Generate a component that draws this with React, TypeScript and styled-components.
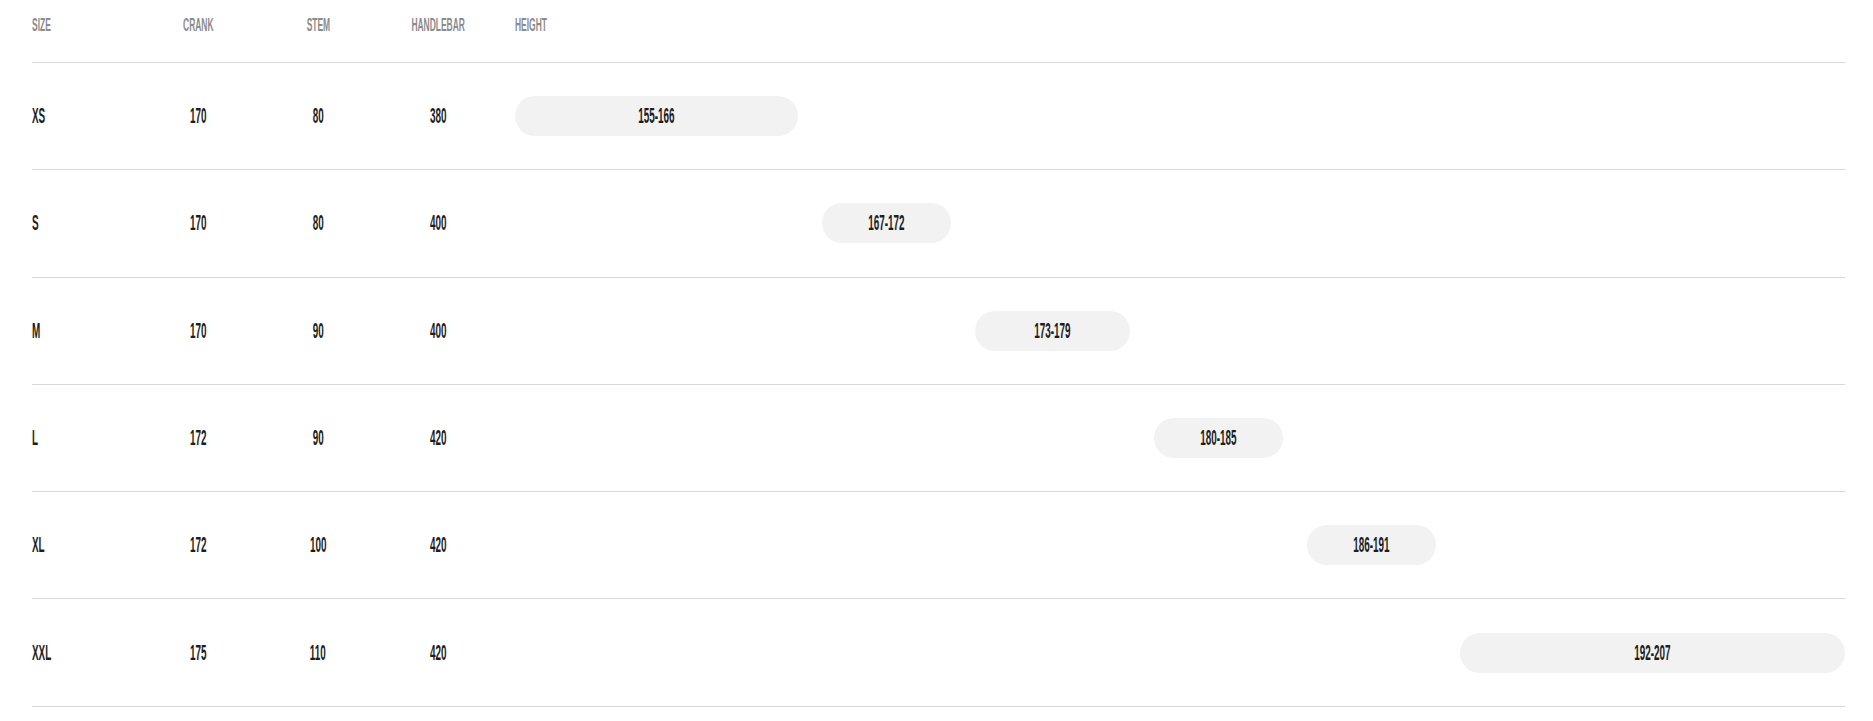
import React from 'react';
import styled, { createGlobalStyle } from 'styled-components';

const MIN_HEIGHT = 155;
const MAX_HEIGHT = 207;

type SizeRow = {
    size: string;
    crank: number;
    stem: number;
    handlebar: number;
    from: number;
    to: number;
};

const ROWS: SizeRow[] = [
    { size: 'XS', crank: 170, stem: 80, handlebar: 380, from: 155, to: 166 },
    { size: 'S', crank: 170, stem: 80, handlebar: 400, from: 167, to: 172 },
    { size: 'M', crank: 170, stem: 90, handlebar: 400, from: 173, to: 179 },
    { size: 'L', crank: 172, stem: 90, handlebar: 420, from: 180, to: 185 },
    { size: 'XL', crank: 172, stem: 100, handlebar: 420, from: 186, to: 191 },
    { size: 'XXL', crank: 175, stem: 110, handlebar: 420, from: 192, to: 207 },
];

const GlobalStyle = createGlobalStyle`
    html, body {
        margin: 0;
        padding: 0;
        background: #fff;
    }
    body {
        font-family: "Liberation Sans", Arial, sans-serif;
        font-weight: 700;
    }
`;

// the reference uses a very condensed display face; squeeze a plain sans to match
const Narrow = styled.span<{ $origin?: string }>`
    display: inline-block;
    transform-origin: ${props => props.$origin || 'center'};
`;

const Table = styled.div`
    padding: 0 28px 0 32px;
`;

const Row = styled.div<{ $header?: boolean }>`
    display: grid;
    grid-template-columns: 106px repeat(3, 120px) 1fr;
    align-items: center;
    border-bottom: 1px solid #d8d8d8;
    box-sizing: border-box;
    height: ${props => props.$header ? '63px' : '107.3px'};
    padding-bottom: ${props => props.$header ? '12px' : '0'};
    color: ${props => props.$header ? '#8b8b8b' : '#1d1d1d'};
    font-size: ${props => props.$header ? '19px' : '22px'};
    line-height: 20px;

    ${Narrow} {
        transform: scaleX(${props => props.$header ? 0.445 : 0.45});
    }
`;

const Cell = styled.div<{ $align?: 'left' | 'center' }>`
    text-align: ${props => props.$align === 'center' ? 'center' : 'left'};
    white-space: nowrap;
`;

const HeightCell = styled.div`
    padding-left: 17px;
`;

const HeightTrack = styled.div`
    display: grid;
    grid-template-columns: repeat(${MAX_HEIGHT - MIN_HEIGHT + 1}, 1fr);
    column-gap: 24px;
`;

const Pill = styled.div`
    height: 40px;
    border-radius: 20px;
    background: #f2f2f2;
    display: flex;
    align-items: center;
    justify-content: center;
    white-space: nowrap;
`;

export default function App() {
    return (
        <>
            <GlobalStyle />
            <Table>
                <Row $header>
                    <Cell><Narrow $origin="left">SIZE</Narrow></Cell>
                    <Cell $align="center"><Narrow>CRANK</Narrow></Cell>
                    <Cell $align="center"><Narrow>STEM</Narrow></Cell>
                    <Cell $align="center"><Narrow>HANDLEBAR</Narrow></Cell>
                    <HeightCell><Narrow $origin="left">HEIGHT</Narrow></HeightCell>
                </Row>
                {ROWS.map(row => (
                    <Row key={row.size}>
                        <Cell><Narrow $origin="left">{row.size}</Narrow></Cell>
                        <Cell $align="center"><Narrow>{row.crank}</Narrow></Cell>
                        <Cell $align="center"><Narrow>{row.stem}</Narrow></Cell>
                        <Cell $align="center"><Narrow>{row.handlebar}</Narrow></Cell>
                        <HeightCell>
                            <HeightTrack>
                                <Pill style={{ gridColumn: `${row.from - MIN_HEIGHT + 1} / span ${row.to - row.from + 1}` }}>
                                    <Narrow>{row.from}-{row.to}</Narrow>
                                </Pill>
                            </HeightTrack>
                        </HeightCell>
                    </Row>
                ))}
            </Table>
        </>
    );
}
